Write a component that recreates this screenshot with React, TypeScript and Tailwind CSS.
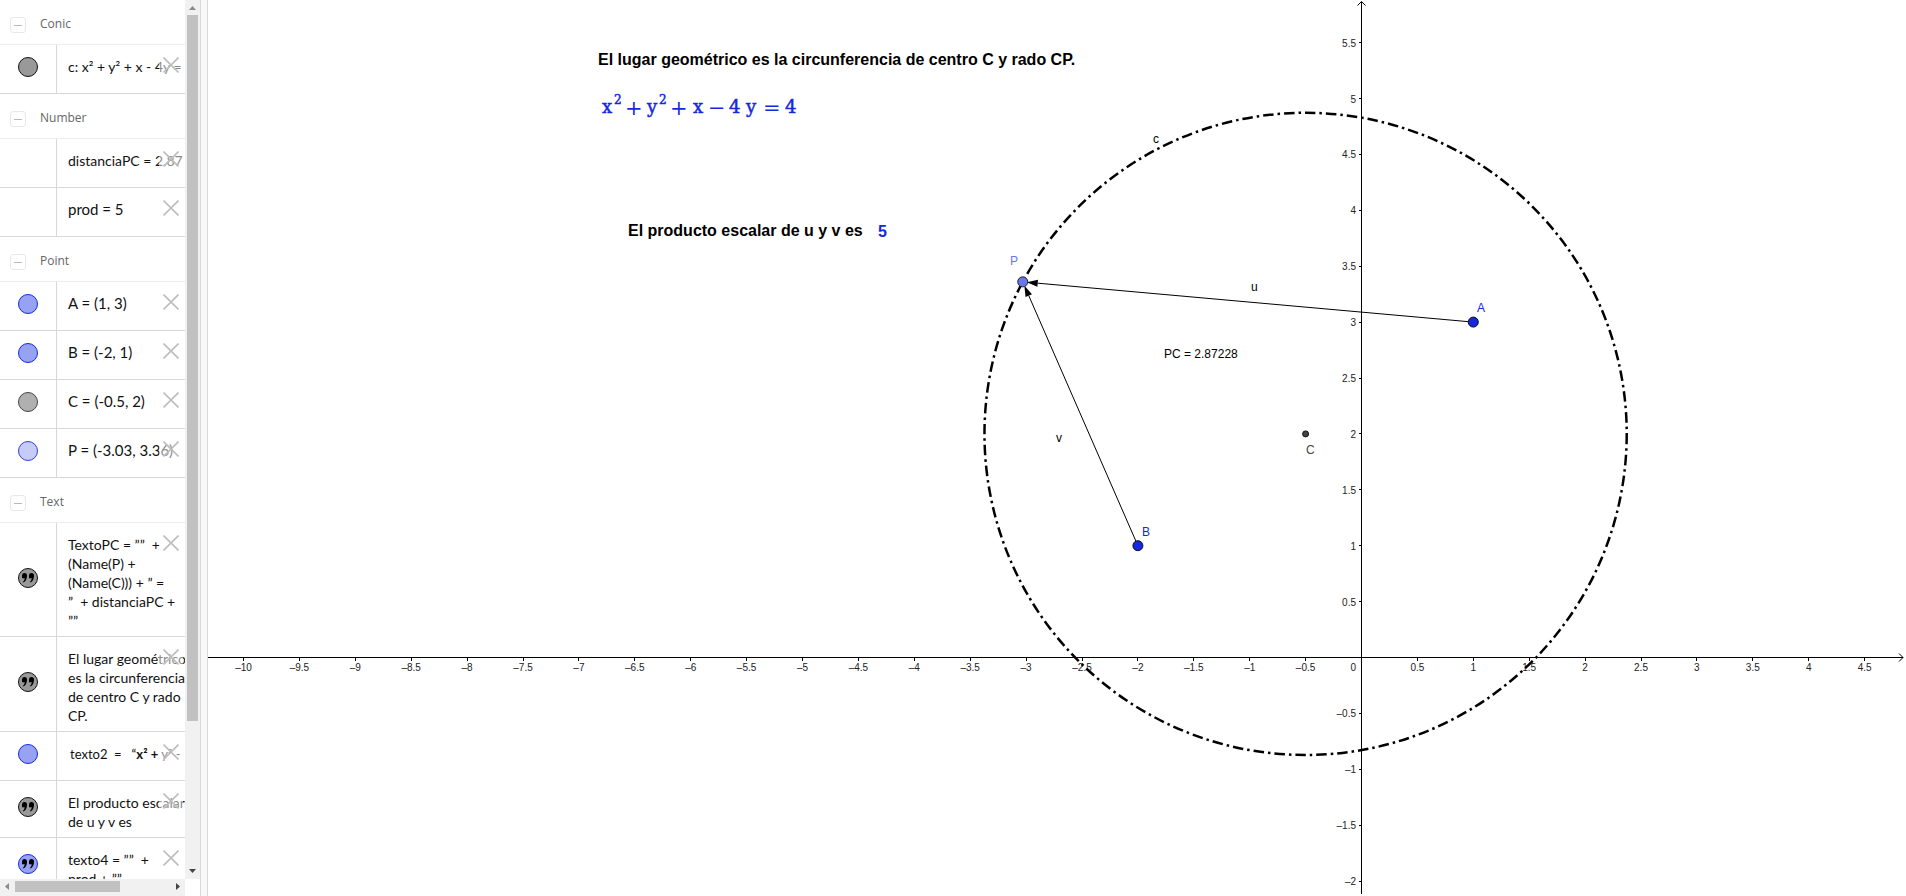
import { ReactNode } from "react";

interface RowProps {
  label: string;
  marble?: string;
  quote?: boolean;
  size?: string;
  children: ReactNode;
}

const UNIT = 111.8;
const ORIGIN_X = 1153.5;
const ORIGIN_Y = 657.5;

const px = (x: number) => ORIGIN_X + x * UNIT;
const py = (y: number) => ORIGIN_Y - y * UNIT;

const range = (from: number, to: number) => {
  const values: number[] = [];
  for (let v = from; v <= to; v += 0.5) values.push(v);
  return values;
};

const format = (v: number) => (v < 0 ? `–${-v}` : `${v}`);

function GroupHeader({ title }: { title: string }) {
  return (
    <div className="flex h-[45px] items-center gap-[14px] border-b border-[#ececec] pl-[10px]">
      <button aria-label={`Collapse ${title}`} className="mt-[6px] flex size-4 items-center justify-center rounded-[3px] border border-[#e8e8e8]">
        <span className="h-px w-2 bg-[#b8b8b8]" />
      </button>
      <h2 className="pt-1 font-['Open_Sans','Noto_Sans',sans-serif] text-xs text-[#666]">{title}</h2>
    </div>
  );
}

function Row({ label, marble, quote, size = "text-[14px]", children }: RowProps) {
  return (
    <div className="relative flex min-h-[49px] border-b border-[#d8d8d8]">
      <div className="flex w-[57px] shrink-0 items-center justify-center border-r border-[#d8d8d8] pb-1">
        {marble && (
          <button aria-label={`Show or hide ${label}`} className={`flex size-5 items-center justify-center rounded-full border ${marble}`}>
            {quote && (
              <svg width="14" height="12" viewBox="0 0 14 12">
                <path d="M1 3.5A2.5 2.5 0 0 1 6 3.6C6 7 4.8 9.6 2.4 10.6L1.8 9.8C3 9 3.6 7.8 3.7 6.2H1ZM8 3.5A2.5 2.5 0 0 1 13 3.6C13 7 11.8 9.6 9.4 10.6L8.8 9.8C10 9 10.6 7.8 10.7 6.2H8Z" fill="#000" />
              </svg>
            )}
          </button>
        )}
      </div>
      <div className={`whitespace-pre pt-3 pb-[6px] pl-[11px] font-['Lato',sans-serif] leading-[19px] text-[#111] ${size}`}>
        {children}
      </div>
      <button aria-label={`Delete ${label}`} className="absolute top-[8px] right-[2px] flex size-6 items-center justify-center bg-white/50">
        <svg width="16" height="16" viewBox="0 0 16 16">
          <path d="M0.5 0.5L15.5 15.5M15.5 0.5L0.5 15.5" stroke="#bdbdbd" strokeWidth="1.6" />
        </svg>
      </button>
    </div>
  );
}

function AlgebraPanel() {
  return (
    <aside className="flex h-full w-[201px] shrink-0 flex-col border-r border-[#dadada] bg-white">
      <div className="flex min-h-0 flex-1">
        <div className="w-[185px] overflow-hidden">
          <GroupHeader title="Conic" />
          <Row label="c" marble="border-[#111] bg-[#999]">c: x² + y² + x - 4y =</Row>
          <GroupHeader title="Number" />
          <Row label="distanciaPC">distanciaPC = 2.87</Row>
          <Row label="prod" size="text-[15px]">prod = 5</Row>
          <GroupHeader title="Point" />
          <Row label="A" size="text-[15px]" marble="border-[#1428e0] bg-[#98a2f2]">A = (1, 3)</Row>
          <Row label="B" size="text-[15px]" marble="border-[#1428e0] bg-[#98a2f2]">B = (-2, 1)</Row>
          <Row label="C" size="text-[15px]" marble="border-[#444] bg-[#b0b0b0]">C = (-0.5, 2)</Row>
          <Row label="P" size="text-[15px]" marble="border-[#2f40e2] bg-[#c7cbf8]">P = (-3.03, 3.36)</Row>
          <GroupHeader title="Text" />
          <Row label="TextoPC" marble="border-[#111] bg-[#999]" quote>
            {'TextoPC = ””  +\n(Name(P) +\n(Name(C))) + ” =\n”  + distanciaPC +\n””'}
          </Row>
          <Row label="texto1" marble="border-[#111] bg-[#999]" quote>
            {"El lugar geométrico\nes la circunferencia\nde centro C y rado\nCP."}
          </Row>
          <Row label="texto2" marble="border-[#1428e0] bg-[#98a2f2]">
            <span className="pl-[2px] text-[13px]">texto2  =   “<b>x² + </b>y² -</span>
          </Row>
          <Row label="texto3" marble="border-[#111] bg-[#999]" quote>
            {"El producto escalar\nde u y v es"}
          </Row>
          <Row label="texto4" marble="border-[#1428e0] bg-[#98a2f2]" quote>
            {'texto4 = ””  +\nprod + ””'}
          </Row>
        </div>
        <div className="flex w-[15px] flex-col items-center bg-[#f1f1f1]">
          <svg width="15" height="15" viewBox="0 0 15 15"><path d="M4 10L7.5 6L11 10Z" fill="#8a8a8a" /></svg>
          <div className="w-[11px] flex-[706] bg-[#c1c1c1]" />
          <div className="flex-[143]" />
          <svg width="15" height="15" viewBox="0 0 15 15"><path d="M4 5L7.5 9L11 5Z" fill="#444" /></svg>
        </div>
      </div>
      <div className="flex h-[17px] w-[185px] items-center bg-[#f1f1f1] pb-[2px]">
        <svg width="15" height="15" viewBox="0 0 15 15"><path d="M9 4L5 7.5L9 11Z" fill="#8a8a8a" /></svg>
        <div className="h-[11px] flex-[105] bg-[#c1c1c1]" />
        <div className="flex-[50]" />
        <svg width="15" height="15" viewBox="0 0 15 15"><path d="M6 4L10 7.5L6 11Z" fill="#444" /></svg>
      </div>
    </aside>
  );
}

function Vector({ from, to }: { from: number[]; to: number[] }) {
  const [x1, y1] = [px(from[0]), py(from[1])];
  const [x2, y2] = [px(to[0]), py(to[1])];
  const length = Math.hypot(x2 - x1, y2 - y1);
  const dx = (x2 - x1) / length;
  const dy = (y2 - y1) / length;
  // the head stops at the rim of the target point
  const tip = [x2 - dx * 4, y2 - dy * 4];
  const base = [x2 - dx * 15, y2 - dy * 15];
  return (
    <g>
      <line x1={x1} y1={y1} x2={base[0]} y2={base[1]} stroke="#000" strokeWidth="1" />
      <polygon points={`${tip} ${base[0] - dy * 3.5},${base[1] + dx * 3.5} ${base[0] + dy * 3.5},${base[1] - dx * 3.5}`} />
    </g>
  );
}

function Axes() {
  return (
    <g stroke="#000" fill="none">
      <path d={`M0 ${ORIGIN_Y}H1695M1691 653.5L1695 657.5L1691 661.5`} />
      <path d={`M${ORIGIN_X} 894V2M1149.5 5.5L1153.5 1.5L1157.5 5.5`} />
      <g shapeRendering="crispEdges">
        {range(-10, 4.5).map((v) => (
          <line key={v} x1={px(v)} x2={px(v)} y1={658} y2={661} />
        ))}
        {range(-2, 5.5).map((v) => (
          <line key={v} x1={1151} x2={1153} y1={py(v)} y2={py(v)} />
        ))}
      </g>
      <g stroke="none" fill="#222" fontSize="10">
        {range(-10, 4.5).filter((v) => v !== 0).map((v) => (
          <text key={v} x={px(v)} y={671} textAnchor="middle">{format(v)}</text>
        ))}
        {range(-2, 5.5).filter((v) => v !== 0).map((v) => (
          <text key={v} x={1148} y={py(v) + 4} textAnchor="end">{format(v)}</text>
        ))}
        <text x={1148} y={671} textAnchor="end">0</text>
      </g>
    </g>
  );
}

function Formula() {
  return (
    <g fill="#1428e0" stroke="#1428e0" strokeWidth="0.5" fontFamily="'DejaVu Serif', serif" fontSize="18">
      <text y={113}>
        <tspan x={394}>x</tspan>
        <tspan x={439}>y</tspan>
        <tspan x={485}>x</tspan>
        <tspan x={521}>4</tspan>
        <tspan x={538}>y</tspan>
        <tspan x={577}>4</tspan>
      </text>
      <text y={104} fontSize="12">
        <tspan x={406}>2</tspan>
        <tspan x={451}>2</tspan>
      </text>
      <text y={115} fontSize="21" stroke="none">
        <tspan x={417}>+</tspan>
        <tspan x={462}>+</tspan>
        <tspan x={500}>−</tspan>
        <tspan x={555}>=</tspan>
      </text>
    </g>
  );
}

function GraphicsView() {
  const P = [-3.03, 3.36];
  return (
    <main className="min-w-0 flex-1">
      <svg className="h-full w-full" viewBox="0 0 1698 896" preserveAspectRatio="xMinYMin meet" fontFamily="'Liberation Sans', Arial, sans-serif" fontSize="12">
        <Axes />
        <circle cx={px(-0.5)} cy={py(2)} r={2.87228 * UNIT} fill="none" stroke="#000" strokeWidth="2.5" strokeDasharray="10.5 4 2.5 4" />
        <Vector from={[1, 3]} to={P} />
        <Vector from={[-2, 1]} to={P} />

        <circle cx={px(1)} cy={py(3)} r="5" fill="#1428e0" stroke="#111" />
        <circle cx={px(-2)} cy={py(1)} r="5" fill="#1428e0" stroke="#111" />
        <circle cx={px(-0.5)} cy={py(2)} r="3" fill="#444" stroke="#111" />
        <circle cx={px(P[0])} cy={py(P[1])} r="5" fill="#6878ea" stroke="#222" />

        <text x={1269} y={312} fill="#1428e0">A</text>
        <text x={934} y={536} fill="#1428e0">B</text>
        <text x={1098} y={454} fill="#444">C</text>
        <text x={802} y={265} fill="#6878ea">P</text>
        <text x={945} y={143}>c</text>
        <text x={1043} y={291}>u</text>
        <text x={848} y={442}>v</text>
        <text x={956} y={358}>PC = 2.87228</text>

        <g fontSize="16" fontWeight="bold">
          <text x={390} y={65}>El lugar geométrico es la circunferencia de centro C y rado CP.</text>
          <text x={420} y={236}>El producto escalar de u y v es</text>
          <text x={670} y={237} fill="#1428e0">5</text>
        </g>
        <Formula />
      </svg>
    </main>
  );
}

function App() {
  return (
    <div className="flex h-screen overflow-hidden bg-white">
      <AlgebraPanel />
      <div className="w-[7px] shrink-0 border-r border-[#dadada] bg-[#f8f8f8]" />
      <GraphicsView />
    </div>
  );
}

export default App;
